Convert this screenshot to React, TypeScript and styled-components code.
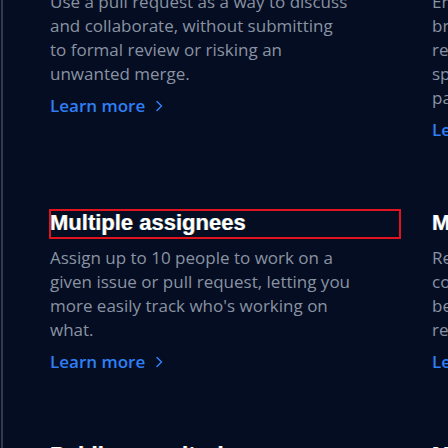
import React from "react";
import styled, { createGlobalStyle } from "styled-components";

const Global = createGlobalStyle`
  html, body { margin: 0; padding: 0; background: #040d21; }
  body { width: 448px; height: 448px; overflow: hidden; }
`;

const Frame = styled.div`
  margin-left: 1px;
  border-left: 2px solid #323a4b;
  height: 448px;
  overflow: hidden;
  background: #040d21;
`;

const Grid = styled.div`
  display: grid;
  grid-template-columns: 350px 350px 350px;
  column-gap: 32px;
  row-gap: 68px;
  margin-top: -46px;
  padding-left: 47px;
  width: 1200px;
`;

const Card = styled.div`
  display: flex;
  flex-direction: column;
`;

const Heading = styled.h3<{ $focused?: boolean }>`
  margin: 0;
  padding-bottom: 3px;
  font-family: "Liberation Sans", Arial, sans-serif;
  font-weight: 700;
  font-size: 22px;
  line-height: 25px;
  color: #ffffff;
  outline: ${(p) => (p.$focused ? "2px solid #e3131d" : "none")};
  outline-offset: -1px;
  text-shadow: -0.6px 0 rgba(60, 170, 255, 0.55), 0.6px 0 rgba(255, 180, 40, 0.5);
  white-space: nowrap;
`;

const Body = styled.p`
  margin: 8px 0 0;
  max-width: 310px;
  font-family: "Open Sans", sans-serif;
  font-size: 17px;
  line-height: 24px;
  color: #8a93a3;
  white-space: pre-line;
`;

const LearnMore = styled.a`
  margin-top: 8px;
  display: inline-flex;
  align-items: center;
  gap: 10px;
  font-family: "Open Sans", sans-serif;
  font-size: 17px;
  line-height: 24px;
  font-weight: 600;
  color: #2f7ff5;
  text-decoration: none;
  align-self: flex-start;
`;

const Chevron = () => (
  <svg width="8" height="12" viewBox="0 0 8 12" fill="none">
    <path d="M2 1.5l4.5 4.5-4.5 4.5" stroke="#2f7ff5" strokeWidth="1.5" strokeLinecap="round" strokeLinejoin="round" />
  </svg>
);

type Item = { title: string; text: string; focused?: boolean };

const items: Item[] = [
  {
    title: "Draft pull requests",
    text: "Use a pull request as a way to discuss\nand collaborate, without submitting\nto formal review or risking an\nunwanted merge.",
  },
  {
    title: "Protected branches",
    text: "Enforce restrictions on how code\nbranches are merged, including\nrequiring reviews, or allowing only\nspecific contributors to work on\nparticular branches.",
  },
  { title: "Code owners", text: "Automatically request reviews from code owners." },
  {
    title: "Multiple assignees",
    text: "Assign up to 10 people to work on a\ngiven issue or pull request, letting you\nmore easily track who's working on\nwhat.",
    focused: true,
  },
  {
    title: "Multiple reviewers",
    text: "Request review from multiple\ncontributors. Changes can only\nbe merged after the required\nreviewers approve them.",
  },
  { title: "Draft requests", text: "Request reviews from multiple people at once." },
  { title: "Public repositories", text: "Collaborate in public." },
  { title: "Multi-line comments", text: "Comment on several lines." },
  { title: "Team reviewers", text: "Request a team." },
];

export default function App() {
  return (
    <>
      <Global />
      <Frame>
        <Grid>
          {items.map((it, i) => (
            <Card key={i}>
              <Heading $focused={it.focused}>{it.title}</Heading>
              <Body>{it.text}</Body>
              <LearnMore href="#">
                Learn more <Chevron />
              </LearnMore>
            </Card>
          ))}
        </Grid>
      </Frame>
    </>
  );
}
